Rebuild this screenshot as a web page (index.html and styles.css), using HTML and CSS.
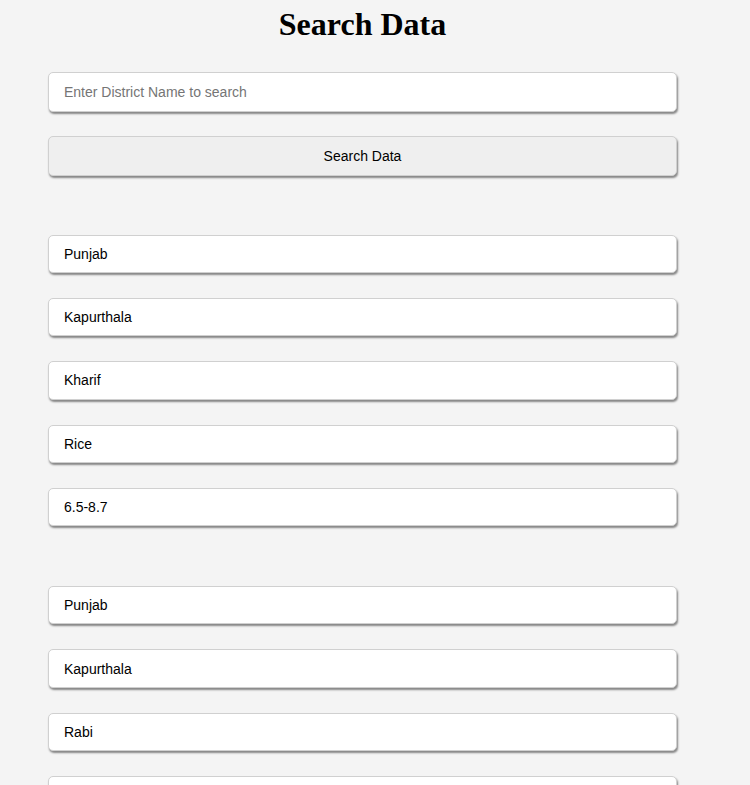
FILE: index.html
```html
<!DOCTYPE html>
<html>
<head>
<meta charset="utf-8">
<link rel="stylesheet" href="styles.css">
</head>
<body>
<div class="page">
  <h1 class="title">Search Data</h1>
  <input class="search-input" type="text" placeholder="Enter District Name to search">
  <button class="search-btn">Search Data</button>
  <div class="results">
    <div class="group">
      <div class="field">Punjab</div>
      <div class="field">Kapurthala</div>
      <div class="field">Kharif</div>
      <div class="field">Rice</div>
      <div class="field">6.5-8.7</div>
    </div>
    <div class="group">
      <div class="field">Punjab</div>
      <div class="field">Kapurthala</div>
      <div class="field">Rabi</div>
      <div class="field">Wheat</div>
      <div class="field">6.5-8.7</div>
    </div>
  </div>
</div>
</body>
</html>
```

FILE: styles.css
```css
html, body {
  margin: 0;
  padding: 0;
  background: #f4f4f4;
}
body {
  font-family: "Liberation Sans", Arial, sans-serif;
  font-size: 14px;
  color: #000;
}
.page {
  width: 629px;
  margin-left: 48px;
  padding-top: 6px;
  display: flex;
  flex-direction: column;
}
.title {
  font-family: "Liberation Serif", "Times New Roman", serif;
  font-size: 32px;
  font-weight: bold;
  text-align: center;
  margin: 0 0 30px 0;
  line-height: 36px;
}
.search-input,
.search-btn,
.field {
  box-sizing: border-box;
  width: 629px;
  border: 1px solid #d0d0d0;
  border-radius: 5px;
  box-shadow: 1px 2px 2px rgba(0, 0, 0, 0.45);
  font-family: "Liberation Sans", Arial, sans-serif;
  font-size: 14px;
}
.search-input {
  height: 40px;
  padding: 0 15px;
  background: #fff;
  color: #000;
  outline: none;
}
.search-input::placeholder {
  color: #757575;
}
.search-btn {
  height: 40px;
  margin-top: 24px;
  background: #efefef;
  color: #000;
  padding: 0;
}
.results {
  margin-top: 58.5px;
  display: flex;
  flex-direction: column;
  gap: 59.5px;
}
.group {
  display: flex;
  flex-direction: column;
  gap: 25px;
}
.field {
  height: 38.4px;
  padding: 0 15px;
  background: #fff;
  display: flex;
  align-items: center;
}
```
